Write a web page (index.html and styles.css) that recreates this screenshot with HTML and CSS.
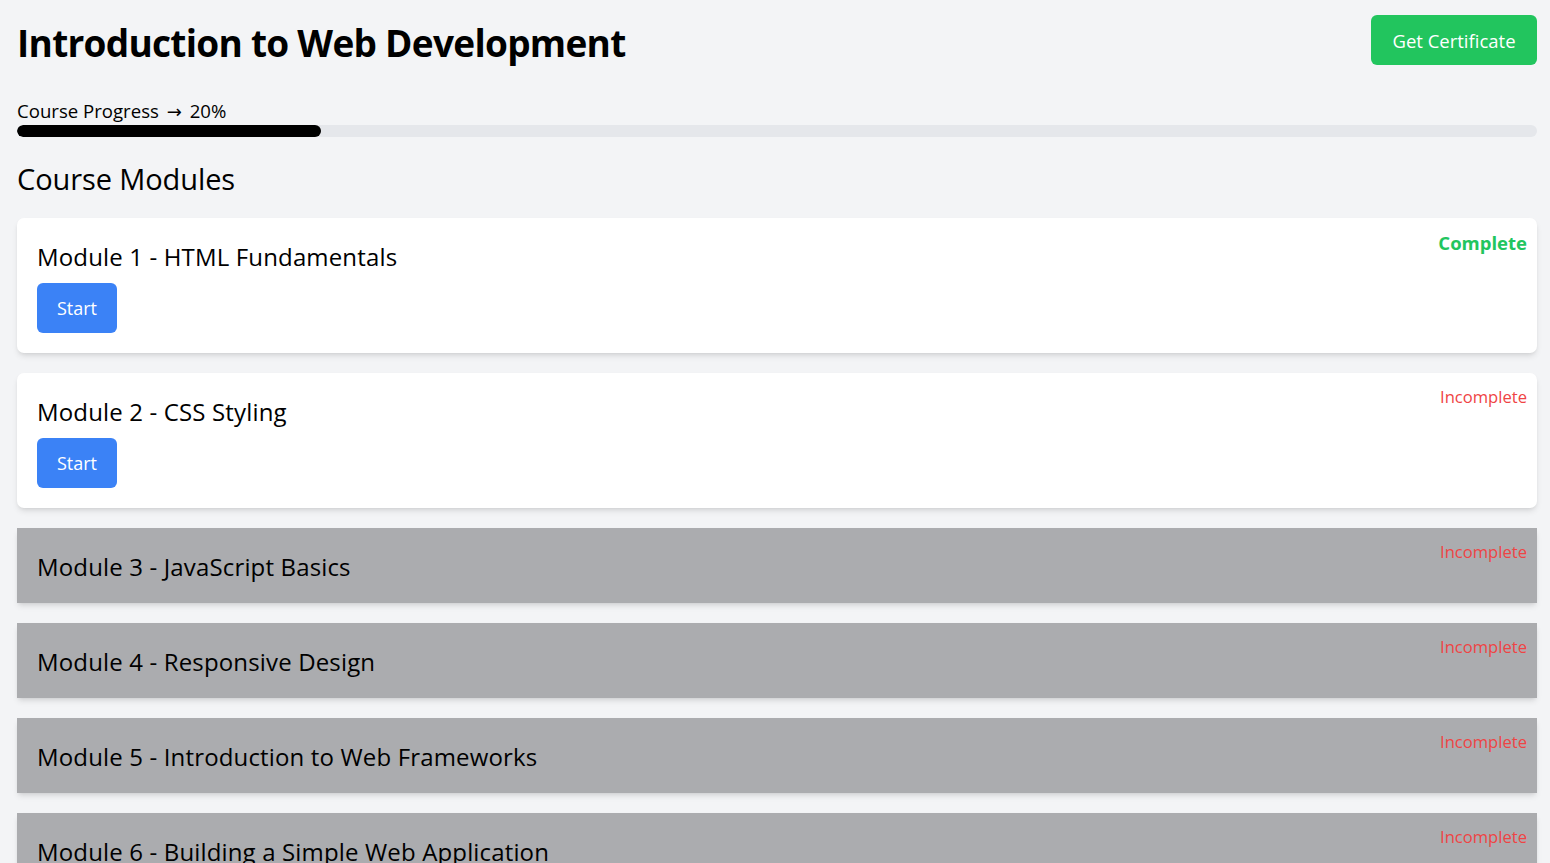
FILE: index.html
```html
<!DOCTYPE html>
<html lang="en">
<head>
<meta charset="utf-8">
<title>Introduction to Web Development</title>
<link rel="stylesheet" href="styles.css">
</head>
<body>
<div class="page">
  <header class="header">
    <h1 class="title">Introduction to Web Development</h1>
    <button class="btn btn-green">Get Certificate</button>
  </header>
  <section class="progress">
    <div class="progress-label">Course Progress <span class="arrow">→</span> 20%</div>
    <div class="progress-track"><div class="progress-fill" style="width:20%"></div></div>
  </section>
  <h2 class="section-title">Course Modules</h2>
  <div class="modules">
    <div class="module">
      <h3 class="module-title">Module 1 - HTML Fundamentals</h3>
      <button class="btn btn-blue">Start</button>
      <span class="status status-complete">Complete</span>
    </div>
    <div class="module">
      <h3 class="module-title">Module 2 - CSS Styling</h3>
      <button class="btn btn-blue">Start</button>
      <span class="status status-incomplete">Incomplete</span>
    </div>
    <div class="module module-locked">
      <h3 class="module-title">Module 3 - JavaScript Basics</h3>
      <span class="status status-incomplete">Incomplete</span>
    </div>
    <div class="module module-locked">
      <h3 class="module-title">Module 4 - Responsive Design</h3>
      <span class="status status-incomplete">Incomplete</span>
    </div>
    <div class="module module-locked">
      <h3 class="module-title">Module 5 - Introduction to Web Frameworks</h3>
      <span class="status status-incomplete">Incomplete</span>
    </div>
    <div class="module module-locked">
      <h3 class="module-title">Module 6 - Building a Simple Web Application</h3>
      <span class="status status-incomplete">Incomplete</span>
    </div>
  </div>
</div>
</body>
</html>
```
FILE: styles.css
```css
* { box-sizing: border-box; }
html, body { margin: 0; padding: 0; }
body {
  background: #f3f4f6;
  font-family: "Open Sans", "Noto Sans", sans-serif;
  color: #000;
}
.page {
  padding: 15px 13px 40px 17px;
}
.header {
  display: flex;
  justify-content: space-between;
  align-items: flex-start;
}
.title {
  margin: 2px 0 0 0;
  font-size: 37px;
  line-height: 52px;
  font-weight: 700;
  letter-spacing: -0.72px;
}
.btn {
  border: none;
  font-family: inherit;
  cursor: pointer;
  color: #fff;
  border-radius: 6px;
  height: 50px;
  padding: 0;
  font-size: 18px;
}
.btn-green { background: #22c55e; width: 166px; font-size: 18.5px; }
.btn-blue { background: #3b82f6; width: 80px; }
.progress { margin-top: 32px; }
.progress-label {
  height: 20px;
  font-size: 18.6px;
  line-height: 20px;
  white-space: nowrap;
}
.arrow {
  font-family: "DejaVu Sans", sans-serif;
  font-size: 18px;
  line-height: 0;
  margin: 0 3px;
}
.progress-track {
  margin-top: 4px;
  height: 12px;
  background: #e5e7eb;
  border-radius: 6px;
  overflow: hidden;
}
.progress-fill {
  height: 100%;
  background: #000;
  border-radius: 6px;
}
.section-title {
  margin: 22px 0 0 0;
  font-size: 29px;
  line-height: 40px;
  font-weight: 400;
  letter-spacing: -0.1px;
}
.modules {
  margin-top: 19px;
  display: flex;
  flex-direction: column;
  gap: 20px;
}
.module {
  position: relative;
  background: #fff;
  border-radius: 7px;
  box-shadow: 0 4px 6px -1px rgba(0,0,0,0.1), 0 2px 4px -2px rgba(0,0,0,0.1);
  padding: 20px;
  display: flex;
  flex-direction: column;
  align-items: flex-start;
}
.module-locked {
  background: #abacaf;
  border-radius: 0;
}
.module-title {
  margin: 0;
  padding-top: 3px;
  font-size: 24px;
  line-height: 32px;
  font-weight: 400;
  letter-spacing: 0.15px;
}
.module .btn-blue { margin-top: 10px; }
.status {
  position: absolute;
  top: 12px;
  right: 10px;
  font-size: 16.6px;
  line-height: 24px;
}
.status-complete { color: #22c55e; font-weight: 700; font-size: 18.5px; top: 13px; }
.status-incomplete { color: #ef4444; }
```
